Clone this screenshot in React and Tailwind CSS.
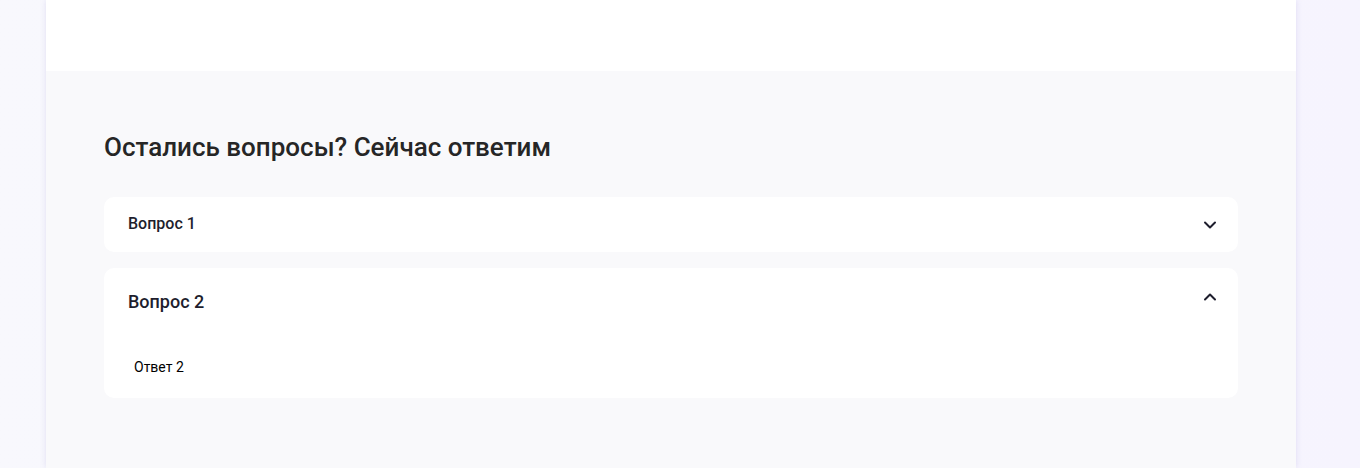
import { useState } from 'react'

const faq = [
  { id: 1, q: 'Вопрос 1', a: 'Ответ 1' },
  { id: 2, q: 'Вопрос 2', a: 'Ответ 2' },
]

function Chevron({ up }) {
  return (
    <svg
      width="14"
      height="14"
      viewBox="0 0 14 14"
      fill="none"
      className={`shrink-0 ${up ? '-mt-2' : 'mt-px'}`}
    >
      <path
        d={up ? 'M2 9.5 7 4.5l5 5' : 'M2 4.5 7 9.5l5-5'}
        stroke="#1e1e2d"
        strokeWidth="2"
        strokeLinecap="round"
        strokeLinejoin="round"
      />
    </svg>
  )
}

export default function App() {
  const [open, setOpen] = useState(2)

  return (
    <div
      className="h-[468px] overflow-hidden bg-gradient-to-r from-[#f8f8fd] to-[#f6f4fe]"
      style={{ fontFamily: 'Roboto, "Liberation Sans", sans-serif' }}
    >
      <div className="ml-[46px] w-[1250px] h-full bg-white shadow-[0_0_6px_rgba(120,110,200,0.18)] flex flex-col">
        <div className="h-[71px] bg-white shrink-0" />
        <section className="flex-1 bg-[#f9f9fb] px-[58px] pt-[60px]">
          <h2 className="text-[26px] leading-[32px] font-medium text-[#262626] mb-[34px]">
            Остались вопросы? Сейчас ответим
          </h2>
          <div className="flex flex-col gap-4">
            {faq.map((item) => {
              const isOpen = open === item.id
              return (
                <div key={item.id} className="bg-white rounded-[10px]">
                  <button
                    onClick={() => setOpen(isOpen ? null : item.id)}
                    className={`w-full flex items-center justify-between pl-6 pr-[21px] text-left text-[#1e1e2d] font-medium ${
                      isOpen ? 'h-[66px] text-[18px]' : 'h-[54px] mb-px text-[16px]'
                    }`}
                  >
                    <span>{item.q}</span>
                    <Chevron up={isOpen} />
                  </button>
                  {isOpen && (
                    <div className="pl-[30px] pt-[23px] pb-[21px] text-[14px] leading-5 text-black">
                      {item.a}
                    </div>
                  )}
                </div>
              )
            })}
          </div>
        </section>
      </div>
    </div>
  )
}
